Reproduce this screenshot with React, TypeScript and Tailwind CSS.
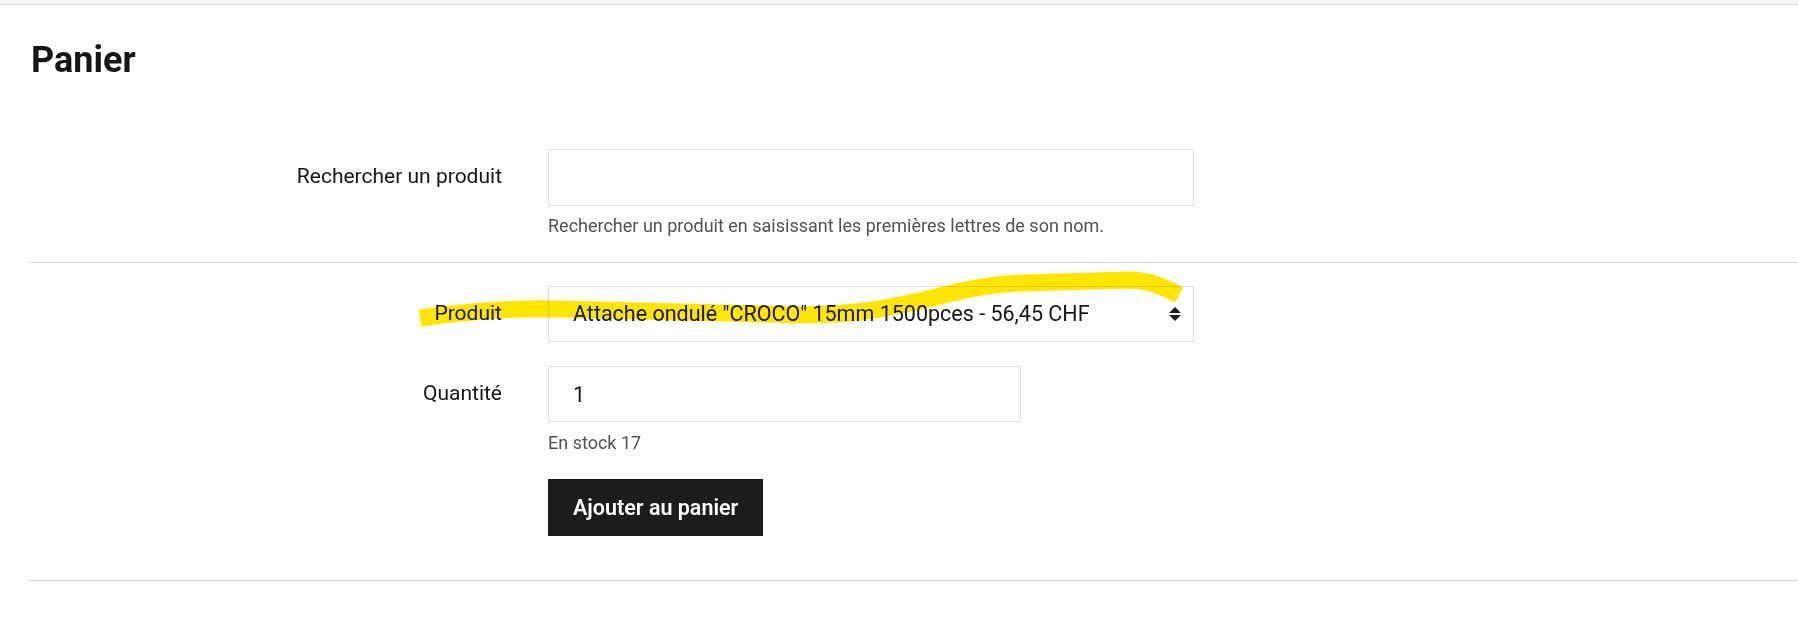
import { useState } from "react";

const font = { fontFamily: "Roboto, 'Liberation Sans', sans-serif" };

function SelectArrows() {
  return (
    <svg width="12" height="16" viewBox="0 0 12 16" className="pointer-events-none absolute right-[13px] top-1/2 -translate-y-1/2" aria-hidden="true">
      <path d="M6 1 L12 7 H0 Z" fill="#1c1c1c" />
      <path d="M0 9 H12 L6 15 Z" fill="#1c1c1c" />
    </svg>
  );
}

function Highlight() {
  return (
    <svg
      className="pointer-events-none absolute left-0 top-0 mix-blend-multiply"
      width="1798"
      height="624"
      viewBox="0 0 1798 624"
      aria-hidden="true"
    >
      <path
        d="M420 318 C 470 311 520 308 560 309 L 800 315 C 860 315 900 306 940 296 C 975 287 1000 284 1020 283 L 1130 280 C 1148 280 1162 286 1179 295"
        fill="none"
        stroke="#ffe600"
        strokeWidth="17"
        strokeLinecap="butt"
      />
    </svg>
  );
}

export default function App() {
  const [qty, setQty] = useState("1");

  return (
    <div className="relative min-h-[624px] bg-white text-[#161616]" style={font}>
      <div className="h-[5px] border-b border-[#dcdcdc] bg-[#f4f4f4]" />

      <h1 className="ml-[31px] mt-[34px] text-[36px] font-bold leading-[1.2]">Panier</h1>

      <div className="ml-[29px] mt-[67px]">
        <div className="flex gap-[46px] border-b border-[#dcdcdc] pb-[24px]">
          <label className="w-[473px] pt-[13px] text-right text-[21px] leading-[28px]">Rechercher un produit</label>
          <div className="w-[646px]">
            <input className="h-[57px] w-full border border-[#e0e0e0] px-[25px] text-[21.5px] outline-none" style={font} />
            <p className="mt-[8px] text-[18px] leading-[24px] text-[#525252]">
              Rechercher un produit en saisissant les premières lettres de son nom.
            </p>
          </div>
        </div>

        <div className="flex gap-[46px] border-b border-[#dcdcdc] pb-[44px] pt-[23px]">
          <div className="flex w-[473px] flex-col items-end">
            <label className="pt-[13px] text-[21px] leading-[28px]">Produit</label>
            <label className="mt-[52px] text-[21px] leading-[28px]">Quantité</label>
          </div>
          <div className="w-[646px]">
            <div className="relative">
              <select
                className="h-[56px] w-full appearance-none border border-[#e0e0e0] bg-white pl-[24px] text-[21.5px] text-[#161616] outline-none"
                style={font}
                defaultValue="croco"
              >
                <option value="croco">Attache ondulé "CROCO" 15mm 1500pces - 56,45 CHF</option>
              </select>
              <SelectArrows />
            </div>
            <input
              className="mt-[24px] h-[56px] w-[473px] border border-[#e0e0e0] px-[24px] text-[21.5px] outline-none"
              style={font}
              value={qty}
              onChange={(e) => setQty(e.target.value)}
            />
            <p className="mt-[9px] text-[18px] leading-[24px] text-[#525252]">En stock 17</p>
            <button className="mt-[24px] h-[57px] bg-[#1c1c1c] px-[25px] text-[21.5px] font-semibold text-white">
              Ajouter au panier
            </button>
          </div>
        </div>
      </div>

      <Highlight />
    </div>
  );
}
